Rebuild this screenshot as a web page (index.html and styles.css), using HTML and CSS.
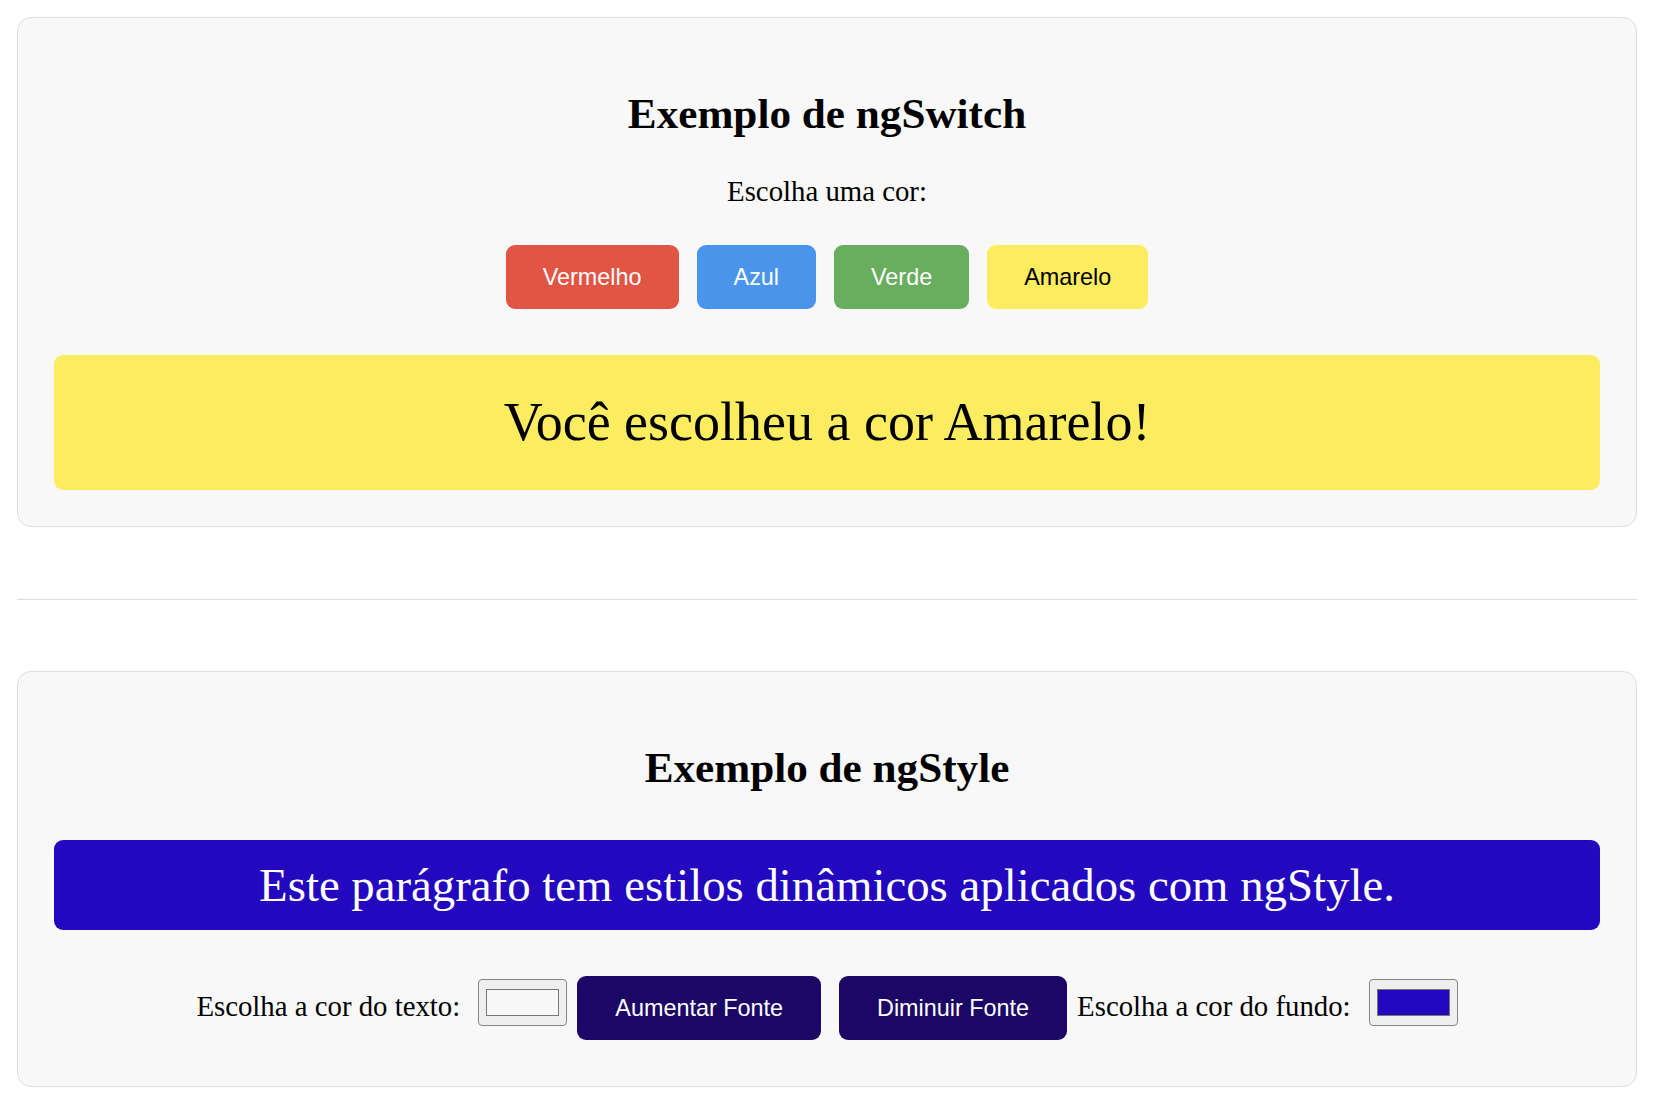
FILE: index.html
```html
<!DOCTYPE html>
<html lang="pt">
<head>
<meta charset="utf-8">
<title>Exemplos Angular</title>
<link rel="stylesheet" href="styles.css">
</head>
<body>
<main class="page">
  <section class="card">
    <h2 class="card-title">Exemplo de ngSwitch</h2>
    <p class="prompt">Escolha uma cor:</p>
    <div class="color-buttons">
      <button class="btn btn-red">Vermelho</button>
      <button class="btn btn-blue">Azul</button>
      <button class="btn btn-green">Verde</button>
      <button class="btn btn-yellow">Amarelo</button>
    </div>
    <div class="result result-yellow">Você escolheu a cor Amarelo!</div>
  </section>

  <hr class="divider">

  <section class="card">
    <h2 class="card-title">Exemplo de ngStyle</h2>
    <p class="styled">Este parágrafo tem estilos dinâmicos aplicados com ngStyle.</p>
    <div class="controls">
      <label class="ctl-label">Escolha a cor do texto:</label>
      <span class="swatch-input"><span class="swatch swatch-white"></span></span>
      <button class="btn btn-dark btn-gap">Aumentar Fonte</button>
      <button class="btn btn-dark">Diminuir Fonte</button>
      <label class="ctl-label">Escolha a cor do fundo:</label>
      <span class="swatch-input swatch-last"><span class="swatch swatch-blue"></span></span>
    </div>
  </section>
</main>
</body>
</html>
```

FILE: styles.css
```css
html, body {
  margin: 0;
  padding: 0;
  background: #ffffff;
}

body {
  font-family: "Liberation Serif", "Times New Roman", serif;
  color: #000;
}

.page {
  padding: 17px 37px 20px 17px;
  display: flex;
  flex-direction: column;
}

.card {
  background: #f8f8f8;
  border: 1px solid #dddddd;
  border-radius: 14px;
  padding: 36px;
  display: flex;
  flex-direction: column;
  align-items: stretch;
}

.card-title {
  margin: 35px 0 0;
  font-size: 43.2px;
  line-height: 50px;
  font-weight: bold;
  text-align: center;
}

.prompt {
  margin: 36px 0 0;
  font-size: 28.8px;
  line-height: 33px;
  text-align: center;
}

.color-buttons {
  margin-top: 37px;
  display: flex;
  justify-content: center;
  gap: 18px;
}

.btn {
  font-family: "Liberation Sans", Arial, sans-serif;
  font-size: 23.4px;
  line-height: 28px;
  padding: 18px 37px;
  border: none;
  border-radius: 9px;
  color: #ffffff;
  cursor: pointer;
}

.btn-red { background: #e15545; }
.btn-blue { background: #4a95eb; }
.btn-green { background: #69ae5f; }
.btn-yellow { background: #fcec60; color: #000; }

.result {
  margin-top: 46px;
  padding: 36px;
  border-radius: 9px;
  font-size: 54px;
  line-height: 63px;
  text-align: center;
}

.result-yellow { background: #fcec60; }

.divider {
  margin: 72px 0 71px;
  border: none;
  border-top: 1px solid #dddddd;
  height: 0;
}

.styled {
  margin: 47px 0 0;
  padding: 18px 36px;
  background: #2308c0;
  color: #ffffff;
  border-radius: 9px;
  font-size: 46.8px;
  line-height: 54px;
  text-align: center;
}

.controls {
  margin-top: 46px;
  margin-bottom: 10px;
  display: flex;
  justify-content: center;
  align-items: flex-start;
}

.ctl-label {
  font-size: 28.8px;
  line-height: 60px;
  margin-right: 18px;
  white-space: nowrap;
}

.swatch-input {
  margin-top: 3px;
  margin-right: 10px;
  width: 89px;
  height: 47px;
  box-sizing: border-box;
  border: 1px solid #858585;
  border-radius: 4px;
  background: #efefef;
  display: flex;
  align-items: center;
  justify-content: center;
}

.swatch-last { margin-right: 0; }

.swatch {
  width: 73px;
  height: 27px;
  box-sizing: border-box;
  border: 1.5px solid #777777;
}

.swatch-white { background: #f7f7f7; }
.swatch-blue { background: #2308c0; }

.btn-dark {
  background: #1d0766;
  padding: 18px 38px;
  margin-right: 10px;
}

.btn-gap { margin-right: 18px; }
```
